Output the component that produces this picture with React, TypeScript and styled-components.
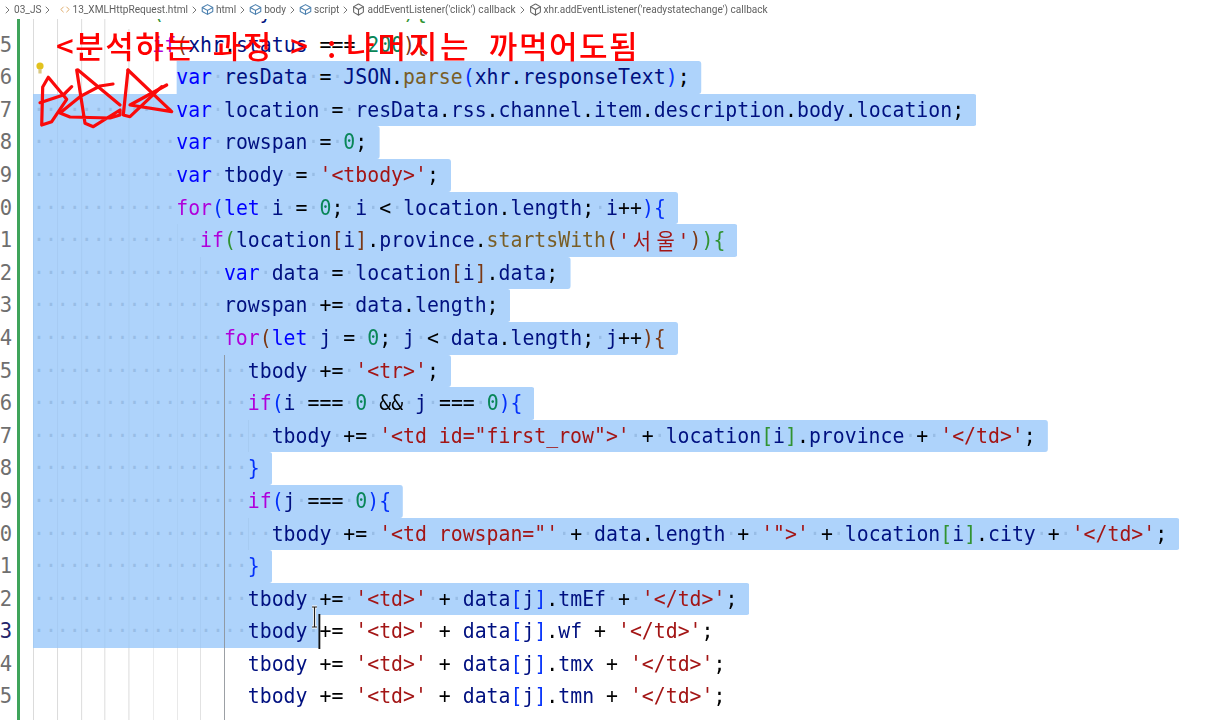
/**
 * Code editor screenshot: VS Code style pane with red hand-written notes on top
 */

import { createGlobalStyle, styled } from 'styled-components';
import { Box, ChevronRight, Code } from 'lucide-react';

const LINE_HEIGHT = 32.6;
// the recording squeezes the editor sideways, so glyphs are taller than their advance
const FONT_SIZE = 21.4;
const CHAR_WIDTH = FONT_SIZE * 0.602;
const SQUEEZE = 11.94 / CHAR_WIDTH;

const colors = {
  keyword: '#0000ff',
  control: '#af00db',
  ident: '#001080',
  fn: '#795e26',
  string: '#a31515',
  number: '#098658',
  plain: '#000000',
};
const bracketColors = ['#0431fa', '#319331', '#7b3814'];

const GlobalStyle = createGlobalStyle`
  html, body {
    margin: 0;
    padding: 0;
    background: #ffffff;
  }
`;

const Page = styled.div`
  position: relative;
  width: 1208px;
  height: 720px;
  overflow: hidden;
  display: flex;
  flex-direction: column;
  background: #ffffff;
`;

const Breadcrumbs = styled.nav`
  flex: none;
  height: 19px;
  display: flex;
  align-items: center;
  padding-left: 1px;
  background: #ffffff;
  z-index: 1;
  color: #616161;
  font-family: 'Roboto', sans-serif;
  font-size: 10.1px;
  white-space: nowrap;
`;

const Crumb = styled.span`
  display: flex;
  align-items: center;
  gap: 2px;
`;

const Separator = styled(ChevronRight)`
  width: 13px;
  height: 12px;
  color: #777777;
`;

const FileIcon = styled(Code)`
  width: 10px;
  height: 11px;
  margin-left: 6px;
  color: #d99a4e;
`;

const SymbolIcon = styled(Box)`
  width: 13px;
  height: 13px;
  color: #666666;
`;

const Viewport = styled.main`
  flex: 1;
  min-height: 0;
  overflow: hidden;
`;

const Lines = styled.div`
  margin-top: -23px;
`;

const Row = styled.div`
  display: flex;
  height: ${LINE_HEIGHT}px;
`;

const LineNumber = styled.div<{ $active?: boolean }>`
  flex: none;
  width: 12px;
  margin-right: 5px;
  display: flex;
  justify-content: flex-end;
  overflow: hidden;
  color: ${({ $active }) => ($active ? '#25256b' : '#6f6f6f')};
  font-family: 'DejaVu Sans Mono', monospace;
  font-size: 20.5px;
  line-height: ${LINE_HEIGHT}px;
`;

const CodeCell = styled.div`
  flex: 1;
  min-width: 0;
  padding-left: 13px;
  border-left: 3px solid #3fa45b;
  font-family: 'DejaVu Sans Mono', 'Noto Sans CJK KR', monospace;
  font-size: ${FONT_SIZE}px;
  line-height: ${LINE_HEIGHT}px;
  white-space: pre;
`;

const Squeezed = styled.div`
  display: flex;
  width: max-content;
  transform: scaleX(${SQUEEZE});
  transform-origin: 0 50%;
`;

const Selection = styled.span<{ $open?: boolean }>`
  display: flex;
  height: ${LINE_HEIGHT}px;
  background: #aed3fb;
  border-radius: ${({ $open }) => ($open ? '0' : '0 3px 3px 0')};
  padding-right: ${({ $open }) => ($open ? '0' : `${CHAR_WIDTH}px`)};
`;

const Plain = styled.span`
  display: flex;
  height: ${LINE_HEIGHT}px;
`;

const IndentStop = styled.span<{ $active?: boolean; $selected?: boolean }>`
  flex: none;
  width: ${CHAR_WIDTH * 2}px;
  height: ${LINE_HEIGHT}px;
  overflow: hidden;
  box-shadow: inset 1px 0 0
    ${({ $active, $selected }) =>
      $active ? '#8b9096' : $selected ? '#a6cbf2' : '#d9d9d9'};
`;

const WhiteSpace = styled.span`
  color: #98bde6;
`;

const Token = styled.span<{ $color: string }>`
  color: ${({ $color }) => $color};
`;

const HangulRun = styled.span`
  font-family: 'Noto Sans CJK KR', sans-serif;
  display: inline-block;
  width: ${CHAR_WIDTH * 2}px;
  text-align: center;
`;

const Caret = styled.span`
  flex: none;
  width: 0;
  height: ${LINE_HEIGHT}px;
  box-shadow: 0 0 0 1px #111111;
`;

const NoteText = styled.div`
  position: absolute;
  left: 56px;
  top: 24px;
  color: #ff0000;
  font-family: 'Noto Sans CJK KR', sans-serif;
  font-size: 31px;
  font-weight: 500;
  line-height: 42px;
  letter-spacing: 1.5px;
  word-spacing: 9px;
  white-space: pre;
`;

const NoteColon = styled.span`
  margin-right: -9px;
`;

const NoteWide = styled.span`
  letter-spacing: 2.8px;
`;

const Overlay = styled.svg`
  position: absolute;
  left: 0;
  top: 0;
  pointer-events: none;
`;

type Kind = keyof typeof colors;

interface LineDef {
  no: number;
  indent: number;
  code: string;
  // first column and last column of the selected range on this line
  selFrom?: number;
  selTo?: number;
  activeGuide?: boolean;
}

const source: LineDef[] = [
  { no: 4, indent: 8, code: "if(xhr.readyState === 4){" },
  { no: 5, indent: 10, code: "if(xhr.status === 200){" },
  { no: 6, indent: 12, code: 'var resData = JSON.parse(xhr.responseText);', selFrom: 12 },
  { no: 7, indent: 12, code: 'var location = resData.rss.channel.item.description.body.location;', selFrom: 0 },
  { no: 8, indent: 12, code: 'var rowspan = 0;', selFrom: 0 },
  { no: 9, indent: 12, code: "var tbody = '<tbody>';", selFrom: 0 },
  { no: 10, indent: 12, code: 'for(let i = 0; i < location.length; i++){', selFrom: 0 },
  { no: 11, indent: 14, code: "if(location[i].province.startsWith('서울')){", selFrom: 0 },
  { no: 12, indent: 16, code: 'var data = location[i].data;', selFrom: 0 },
  { no: 13, indent: 16, code: 'rowspan += data.length;', selFrom: 0 },
  { no: 14, indent: 16, code: 'for(let j = 0; j < data.length; j++){', selFrom: 0 },
  { no: 15, indent: 18, code: "tbody += '<tr>';", selFrom: 0, activeGuide: true },
  { no: 16, indent: 18, code: 'if(i === 0 && j === 0){', selFrom: 0, activeGuide: true },
  { no: 17, indent: 20, code: `tbody += '<td id="first_row">' + location[i].province + '</td>';`, selFrom: 0, activeGuide: true },
  { no: 18, indent: 18, code: '}', selFrom: 0, activeGuide: true },
  { no: 19, indent: 18, code: 'if(j === 0){', selFrom: 0, activeGuide: true },
  { no: 20, indent: 20, code: `tbody += '<td rowspan="' + data.length + '">' + location[i].city + '</td>';`, selFrom: 0, activeGuide: true },
  { no: 21, indent: 18, code: '}', selFrom: 0, activeGuide: true },
  { no: 22, indent: 18, code: "tbody += '<td>' + data[j].tmEf + '</td>';", selFrom: 0, activeGuide: true },
  { no: 23, indent: 18, code: "tbody += '<td>' + data[j].wf + '</td>';", selFrom: 0, selTo: 24, activeGuide: true },
  { no: 24, indent: 18, code: "tbody += '<td>' + data[j].tmx + '</td>';", activeGuide: true },
  { no: 25, indent: 18, code: "tbody += '<td>' + data[j].tmn + '</td>';", activeGuide: true },
  { no: 26, indent: 18, code: "tbody += '</tr>';", activeGuide: true },
];

interface Piece {
  text: string;
  color: string;
  space?: boolean;
}

const tokenPattern =
  /('[^']*')|(\b(?:var|let)\b)|(\b(?:for|if)\b)|(\b\d+\b)|([()[\]{}])|(\b(?:parse|startsWith)\b)|(\s+)|([A-Za-z_][\w]*)|(.)/g;

// keeps a running bracket depth across lines, like bracket pair colorization
let depth = 1;

function tokenize(code: string): Piece[] {
  const pieces: Piece[] = [];
  for (const m of code.matchAll(tokenPattern)) {
    const text = m[0];
    let kind: Kind = 'plain';
    if (m[1]) kind = 'string';
    else if (m[2]) kind = 'keyword';
    else if (m[3]) kind = 'control';
    else if (m[4]) kind = 'number';
    else if (m[6]) kind = 'fn';
    else if (m[8]) kind = 'ident';

    if (m[5]) {
      const opening = '([{'.includes(text);
      if (!opening) depth -= 1;
      pieces.push({ text, color: bracketColors[((depth % 3) + 3) % 3] });
      if (opening) depth += 1;
    } else if (m[7]) {
      pieces.push({ text, color: colors.plain, space: true });
    } else {
      pieces.push({ text, color: colors[kind] });
    }
  }
  return pieces;
}

const lines = source.map((line) => ({ ...line, pieces: tokenize(line.code) }));

function renderPieces(pieces: Piece[], selected: boolean) {
  return pieces.map((piece, i) => {
    if (piece.space) {
      return selected ? (
        <WhiteSpace key={i}>{'·'.repeat(piece.text.length)}</WhiteSpace>
      ) : (
        <span key={i}>{piece.text}</span>
      );
    }
    const parts = piece.text.split(/([가-힣])/).filter(Boolean);
    return (
      <Token key={i} $color={piece.color}>
        {parts.map((part, j) =>
          /[가-힣]/.test(part) ? <HangulRun key={j}>{part}</HangulRun> : part,
        )}
      </Token>
    );
  });
}

function Indent({ line, selected }: { line: LineDef; selected: boolean }) {
  const stops = [];
  for (let col = 0; col < line.indent; col += 2) {
    stops.push(
      <IndentStop key={col} $selected={selected} $active={line.activeGuide && col === 16}>
        {selected ? <WhiteSpace>··</WhiteSpace> : null}
      </IndentStop>,
    );
  }
  return <>{stops}</>;
}

// splits the pieces at a code column, used for the line where the selection stops
function splitPieces(pieces: Piece[], at: number): [Piece[], Piece[]] {
  const left: Piece[] = [];
  const right: Piece[] = [];
  let col = 0;
  pieces.forEach((piece) => {
    if (col + piece.text.length <= at) left.push(piece);
    else if (col >= at) right.push(piece);
    else {
      left.push({ ...piece, text: piece.text.slice(0, at - col) });
      right.push({ ...piece, text: piece.text.slice(at - col) });
    }
    col += piece.text.length;
  });
  return [left, right];
}

function CodeLine({ line }: { line: (typeof lines)[number] }) {
  const { selFrom, selTo, indent, pieces } = line;

  let body;
  if (selFrom === undefined) {
    body = (
      <Plain>
        <Indent line={line} selected={false} />
        {renderPieces(pieces, false)}
      </Plain>
    );
  } else if (selFrom > 0) {
    body = (
      <>
        <Indent line={line} selected={false} />
        <Selection>{renderPieces(pieces, true)}</Selection>
      </>
    );
  } else if (selTo !== undefined) {
    const [left, right] = splitPieces(pieces, selTo - indent);
    body = (
      <>
        <Selection $open>
          <Indent line={line} selected />
          {renderPieces(left, true)}
        </Selection>
        <Caret />
        <Plain>{renderPieces(right, false)}</Plain>
      </>
    );
  } else {
    body = (
      <Selection>
        <Indent line={line} selected />
        {renderPieces(pieces, true)}
      </Selection>
    );
  }

  return (
    <Row>
      <LineNumber $active={line.no === 23}>{line.no}</LineNumber>
      <CodeCell>
        <Squeezed>{body}</Squeezed>
      </CodeCell>
    </Row>
  );
}

function TagIcon() {
  return (
    <svg width="13" height="13" viewBox="0 0 16 16" fill="none" stroke="#4a7fae" strokeWidth="1.3">
      <path d="M8 2 14.5 5.6v4.8L8 14 1.5 10.4V5.6z" strokeLinejoin="round" />
      <path d="M1.5 5.6 8 9.2l6.5-3.6M8 9.2V14" />
    </svg>
  );
}

function Scribble() {
  return (
    <Overlay width="1208" height="720" viewBox="0 0 1208 720">
      <g fill="none" stroke="#fa0a0a" strokeWidth="3.2" strokeLinecap="round" strokeLinejoin="round">
        <path d="M41.7 125 42.7 87 48.3 77.3 66.7 99.3 51.7 121.7z" />
        <path d="M40 102.7 63.3 95 71.7 86.7" />
        <path d="M78 70 120 105" />
        <path d="M76.7 70 85 123.3 93.3 126.7 120 110 120 115 110 118 70 117 60 113 80 96.7 100 86 113 84" />
        <path d="M128 70 123.3 115 130 116.7 161.7 86.7" />
        <path d="M128 70 171.7 111.7 130 105 166.7 85" />
      </g>
      {/* code action light bulb */}
      <g>
        <circle cx="40" cy="66" r="3.6" fill="#e2c21e" />
        <rect x="38.4" y="69" width="3.2" height="4.5" fill="#d9c880" />
      </g>
      {/* mouse I-beam */}
      <path
        d="M312 607h5M314.5 607v20M312 627h5"
        fill="none"
        stroke="#ffffff"
        strokeWidth="3"
      />
      <path d="M312 607h5M314.5 607v20M312 627h5" fill="none" stroke="#1c1c1c" strokeWidth="1.2" />
    </Overlay>
  );
}

export default function App() {
  return (
    <>
      <GlobalStyle />
      <Page>
        <Breadcrumbs>
          <Separator />
          <Crumb>03_JS</Crumb>
          <Separator />
          <Crumb>
            <FileIcon />
            13_XMLHttpRequest.html
          </Crumb>
          <Separator />
          <Crumb>
            <TagIcon />
            html
          </Crumb>
          <Separator />
          <Crumb>
            <TagIcon />
            body
          </Crumb>
          <Separator />
          <Crumb>
            <TagIcon />
            script
          </Crumb>
          <Separator />
          <Crumb>
            <SymbolIcon />
            addEventListener('click') callback
          </Crumb>
          <Separator />
          <Crumb>
            <SymbolIcon />
            xhr.addEventListener('readystatechange') callback
          </Crumb>
        </Breadcrumbs>
        <Viewport>
          <Lines>
            {lines.map((line) => (
              <CodeLine key={line.no} line={line} />
            ))}
          </Lines>
        </Viewport>
        <Scribble />
        <NoteText>
          {'<분석하는 과정 > '}
          <NoteColon>{': '}</NoteColon>
          <NoteWide>나머지는</NoteWide>
          {' 까먹어도됨'}
        </NoteText>
      </Page>
    </>
  );
}
